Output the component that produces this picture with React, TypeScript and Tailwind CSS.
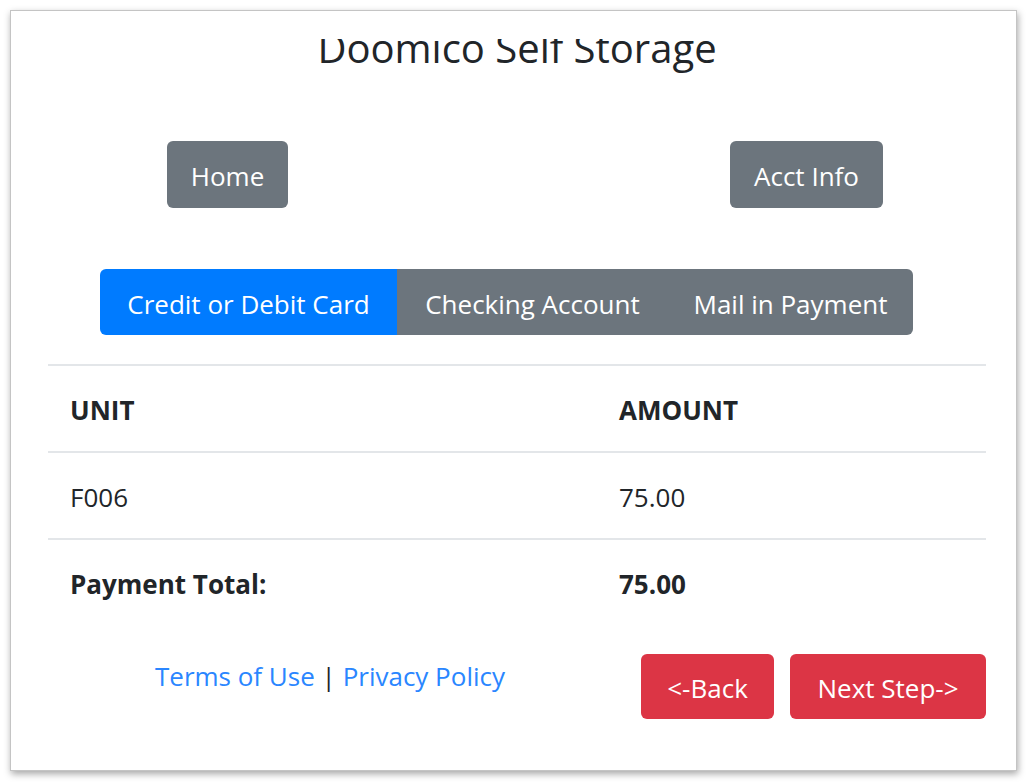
// Doomico Self Storage - payment summary step
// Bootstrap-like page captured inside a framed snippet

const FONT = "font-['Open_Sans','Noto_Sans',sans-serif]";

// -- Data ---------------------------------------------------------------------

const TABS = [
  { label: 'Credit or Debit Card', width: 'w-[297px]', active: true },
  { label: 'Checking Account', width: 'w-[271px]', active: false },
  { label: 'Mail in Payment', width: 'w-[245px]', active: false },
];

const ROWS = [
  { unit: 'UNIT', amount: 'AMOUNT', bold: true },
  { unit: 'F006', amount: '75.00', bold: false },
  { unit: 'Payment Total:', amount: '75.00', bold: true },
];

// -- Pieces -------------------------------------------------------------------

function GrayButton({ label }: { label: string }): React.JSX.Element {
  return (
    <button className="h-[67px] rounded-[6px] bg-[#6c757d] px-[24px] pt-[4px] text-[26px] leading-[39px] text-white">
      {label}
    </button>
  );
}

function RedButton({ label, width }: { label: string; width: string }): React.JSX.Element {
  return (
    <button
      className={`h-[65px] ${width} rounded-[6px] bg-[#dc3545] pt-[4px] text-[26px] leading-[39px] text-white`}
    >
      {label}
    </button>
  );
}

// -- Main ---------------------------------------------------------------------

export default function App(): React.JSX.Element {
  return (
    <div className={`h-[782px] w-[1027px] overflow-hidden bg-white ${FONT} text-[#212529]`}>
      <div className="ml-[10px] mt-[10px] h-[761px] w-[1007px] border border-[#c4c4c4] bg-white pt-[28px] pl-[37px] pr-[30px] shadow-[1px_3px_7px_rgba(0,0,0,0.35)]">

        {/* title, cut off at the top like the capture */}
        <div className="h-[35px] overflow-hidden">
          <h1 className="-mt-[15.5px] text-center text-[40px] font-normal leading-[48px]">
            Doomico Self Storage
          </h1>
        </div>

        {/* nav buttons */}
        <div className="mt-[67px] flex justify-center gap-[379px]">
          <div className="flex w-[200px] justify-center">
            <GrayButton label="Home" />
          </div>
          <div className="flex w-[200px] justify-center">
            <GrayButton label="Acct Info" />
          </div>
        </div>

        {/* payment method tabs */}
        <div className="ml-[52px] mt-[61px] flex h-[66px] w-[813px] overflow-hidden rounded-[6px]">
          {TABS.map((t) => (
            <button
              key={t.label}
              className={`${t.width} h-full pt-[4px] text-[26px] leading-[39px] text-white ${
                t.active ? 'bg-[#007bff]' : 'bg-[#6c757d]'
              }`}
            >
              {t.label}
            </button>
          ))}
        </div>

        {/* summary table */}
        <div className="mt-[29px]">
          {ROWS.map((r) => (
            <div
              key={r.unit}
              className={`flex h-[87px] items-center border-t-2 border-[#e3e6e9] pt-[3px] text-[26px] ${
                r.bold ? 'font-bold' : 'font-normal'
              }`}
            >
              <div className="w-[549px] pl-[22px]">{r.unit}</div>
              <div className="pl-[22px]">{r.amount}</div>
            </div>
          ))}
        </div>

        {/* footer */}
        <div className="mt-[29px] flex items-start">
          <div className="w-[564px] pt-[3px] text-center text-[26px] leading-[39px]">
            <a className="text-[#2a86ff]">Terms of Use</a>
            <span> | </span>
            <a className="text-[#2a86ff]">Privacy Policy</a>
          </div>
          <div className="flex flex-1 justify-end gap-[16px]">
            <RedButton label="<-Back" width="w-[133px]" />
            <RedButton label="Next Step->" width="w-[196px]" />
          </div>
        </div>
      </div>
    </div>
  );
}
